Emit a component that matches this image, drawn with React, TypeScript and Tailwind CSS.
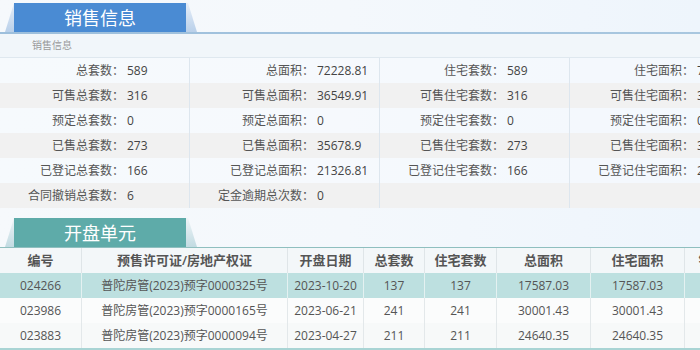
import React from "react";

const font = { fontFamily: '"Open Sans", "Noto Sans CJK SC", sans-serif' };

type Cell = [string, string] | null;
const rows: Cell[][] = [
  [["总套数", "589"], ["总面积", "72228.81"], ["住宅套数", "589"], ["住宅面积", "72228.81"]],
  [["可售总套数", "316"], ["可售总面积", "36549.91"], ["可售住宅套数", "316"], ["可售住宅面积", "36549.91"]],
  [["预定总套数", "0"], ["预定总面积", "0"], ["预定住宅套数", "0"], ["预定住宅面积", "0"]],
  [["已售总套数", "273"], ["已售总面积", "35678.9"], ["已售住宅套数", "273"], ["已售住宅面积", "35678.9"]],
  [["已登记总套数", "166"], ["已登记总面积", "21326.81"], ["已登记住宅套数", "166"], ["已登记住宅面积", "21326.81"]],
  [["合同撤销总套数", "6"], ["定金逾期总次数", "0"], null, null],
];

const cols = [
  { t: "编号", w: "w-[82px]" },
  { t: "预售许可证/房地产权证", w: "w-[206px]" },
  { t: "开盘日期", w: "w-[76px]" },
  { t: "总套数", w: "w-[61px]" },
  { t: "住宅套数", w: "w-[72px]" },
  { t: "总面积", w: "w-[94px]" },
  { t: "住宅面积", w: "w-[94px]" },
  { t: "销售状态", w: "w-[80px]" },
];

const units = [
  ["024266", "普陀房管(2023)预字0000325号", "2023-10-20", "137", "137", "17587.03", "17587.03", ""],
  ["023986", "普陀房管(2023)预字0000165号", "2023-06-21", "241", "241", "30001.43", "30001.43", ""],
  ["023883", "普陀房管(2023)预字0000094号", "2023-04-27", "211", "211", "24640.35", "24640.35", ""],
];

function Tab({ text, color, wing }: { text: string; color: string; wing: string }) {
  return (
    <div className="relative ml-[5px] h-[29px] w-[192px]">
      <div className={`absolute inset-0 ${wing} [clip-path:polygon(9px_0,183px_0,192px_100%,0_100%)]`} />
      <div className={`absolute left-[9px] top-0 h-full w-[172px] ${color} flex items-center justify-center text-white text-[18px] leading-none`}>
        {text}
      </div>
    </div>
  );
}

export default function App() {
  return (
    <div className="w-[700px] h-[350px] overflow-hidden bg-gradient-to-r from-[#f6f9fc] via-[#f4f8fc] to-[#eef5fc]" style={font}>
      <div className="pt-[3px]">
        <Tab text="销售信息" color="bg-[#4a8bd3]" wing="bg-gradient-to-b from-[#e6eef8] to-[#b9d0ea]" />
      </div>
      <div className="h-[2px] bg-gradient-to-r from-[#9dbfdc] to-[#a9c7df]" />
      <div className="h-[24px] bg-[#f1f6fa] border-b border-[#dfe8ef] flex items-center pl-[32px] text-[10px] text-[#9a9a9a]">
        销售信息
      </div>
      <div className="w-[760px]">
        {rows.map((r, i) => (
          <div key={i} className={`flex h-[25px] ${i % 2 === 1 ? "bg-[#f1f1f1]" : "bg-[#f7fafd]/60"}`}>
            {r.map((c, j) => (
              <div key={j} className={`w-[190px] flex items-center text-[12px] ${j < 3 ? "border-r border-[#dde6ee]" : ""}`}>
                {c && (
                  <>
                    <span className="w-[124px] text-right text-[#555]">{c[0]}：</span>
                    <span className="pl-[3px] text-[#444]">{c[1]}</span>
                  </>
                )}
              </div>
            ))}
          </div>
        ))}
      </div>
      <div className="pt-[10px]">
        <Tab text="开盘单元" color="bg-[#5eaba9]" wing="bg-gradient-to-b from-[#eef4f7] to-[#c2dbe2]" />
      </div>
      <div className="w-[765px] border-t border-[#8fbfbf]">
        <div className="flex h-[25px] bg-[#f3f7f9] text-[13px] font-semibold text-[#555]">
          {cols.map((c, i) => (
            <div key={i} className={`${c.w} flex items-center justify-center border-r border-[#dfe5e8]`}>
              {c.t}
            </div>
          ))}
        </div>
        {units.map((u, i) => (
          <div key={i} className={`flex h-[25px] text-[12px] text-[#555] ${i === 0 ? "bg-[#bde0e0]" : i === 1 ? "bg-[#fbfcfc]" : "bg-[#f7f9f9]"}`}>
            {u.map((v, j) => (
              <div key={j} className={`${cols[j].w} flex items-center justify-center border-r ${i === 0 ? "border-[#e4f1f1]" : "border-[#e3e8ea]"}`}>
                {v}
              </div>
            ))}
          </div>
        ))}
        <div className="h-[5px] bg-[#a9d4d4]" />
      </div>
    </div>
  );
}
